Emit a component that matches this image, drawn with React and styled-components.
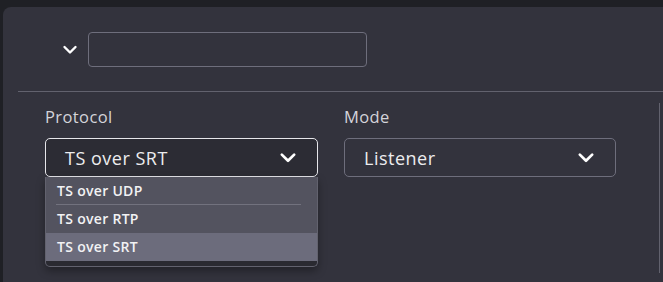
import styled, { createGlobalStyle } from "styled-components";

const GlobalStyle = createGlobalStyle`
  html, body {
    margin: 0;
    padding: 0;
    background: #1f2025;
    font-family: "Open Sans", "Noto Sans", sans-serif;
  }
`;

const Panel = styled.div`
  margin: 7px 0 0 3px;
  height: 275px;
  background: #33333d;
  border-top-left-radius: 8px;
  overflow: hidden;
`;

const Header = styled.div`
  display: flex;
  align-items: center;
  gap: 10px;
  padding: 25px 0 0 59px;
  height: 35px;
`;

const NameInput = styled.div`
  width: 277px;
  height: 33px;
  border: 1px solid #6e6e7c;
  border-radius: 4px;
`;

const Divider = styled.div`
  margin: 24px 0 0 15px;
  height: 1px;
  background: #62626e;
`;

const Body = styled.div`
  display: flex;
  gap: 26px;
  margin: 11px 0 0 15px;
  width: 614px;
  height: 170px;
  padding-left: 27px;
  border-right: 1px solid #62626e;
`;

const Field = styled.div`
  position: relative;
  width: ${(p) => p.$w}px;
`;

const Label = styled.div`
  color: #d4d4da;
  font-size: 16.5px;
  letter-spacing: 0.4px;
  line-height: 22px;
  margin-top: 3px;
  margin-bottom: 10px;
`;

const Select = styled.div`
  display: flex;
  align-items: center;
  justify-content: space-between;
  height: 37px;
  padding: 0 20px 0 19px;
  border: 1px solid ${(p) => (p.$open ? "#e6e6ea" : "#6e6e7c")};
  border-radius: 5px;
  color: #ececef;
  font-size: 18px;
  letter-spacing: 0.5px;
  background: ${(p) => (p.$open ? "#2c2c34" : "transparent")};
`;

const Listbox = styled.ul`
  position: absolute;
  left: 0;
  right: 0;
  top: 74px;
  margin: 0;
  padding: 0 0 5px;
  list-style: none;
  background: #2a2a31;
  border: 1px solid #62626e;
  border-top: none;
  border-radius: 0 0 5px 5px;
  box-shadow: 0 4px 8px rgba(0, 0, 0, 0.35);
`;

const Option = styled.li`
  position: relative;
  height: 28px;
  line-height: 28px;
  padding-left: 11px;
  font-size: 14px;
  font-weight: 600;
  letter-spacing: 0.3px;
  color: #f2f2f4;
  background: ${(p) => (p.$active ? "#6c6c7c" : "#53535f")};
  ${(p) =>
    p.$sep &&
    `&::after {
      content: "";
      position: absolute;
      left: 10px;
      right: 16px;
      bottom: 0;
      height: 1px;
      background: #72727e;
    }`}
`;

function Chevron({ size = 16 }) {
  return (
    <svg width={size} height={size} viewBox="0 0 16 16" fill="none">
      <polyline
        points="2.5,5 8,10.5 13.5,5"
        stroke="#ffffff"
        strokeWidth="2.4"
        strokeLinecap="round"
        strokeLinejoin="round"
      />
    </svg>
  );
}

const options = ["TS over UDP", "TS over RTP", "TS over SRT"];

export default function App() {
  return (
    <>
      <GlobalStyle />
      <Panel>
        <Header>
          <Chevron size={16} />
          <NameInput />
        </Header>
        <Divider />
        <Body>
          <Field $w={273}>
            <Label>Protocol</Label>
            <Select $open>
              <span>TS over SRT</span>
              <Chevron size={18} />
            </Select>
            <Listbox>
              {options.map((o, i) => (
                <Option key={o} $sep={i === 0} $active={o === "TS over SRT"}>
                  {o}
                </Option>
              ))}
            </Listbox>
          </Field>
          <Field $w={272}>
            <Label>Mode</Label>
            <Select>
              <span>Listener</span>
              <Chevron size={18} />
            </Select>
          </Field>
        </Body>
      </Panel>
    </>
  );
}
